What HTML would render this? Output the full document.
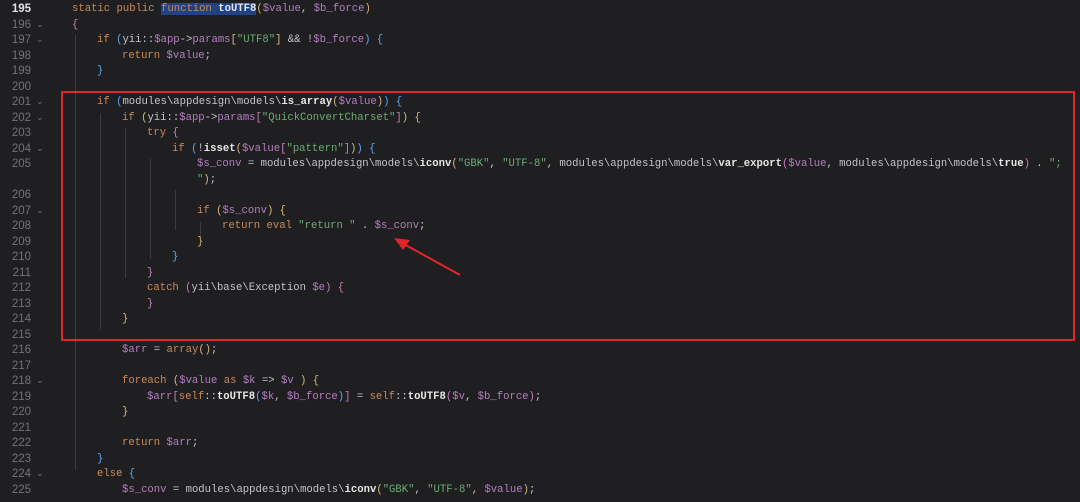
<!DOCTYPE html>
<html><head><meta charset="utf-8"><style>
body{margin:0;width:1080px;height:488px;background:#1f1f21;overflow:hidden;position:relative;font-family:"Liberation Mono",monospace;font-size:10.6px;color:#c3c5ca}
#w{position:absolute;left:0;top:2px;width:1080px;height:500px}
.r{position:absolute;left:0;height:15.5px;line-height:15.5px;white-space:pre;width:1080px}
.n{position:absolute;right:1049px;color:#6f737a;text-align:right;font-family:"Liberation Sans",sans-serif;font-size:11.5px}
.n.cur{color:#dfe1e5;font-weight:bold}
.f{position:absolute;left:36px;color:#6f737a;font-size:9px}
.c{position:absolute}
.k{color:#c98a58}.v{color:#b47ec0}.s{color:#6aab73}.fn{color:#e6e6e6;font-weight:bold}.p1{color:#d5b778}.p2{color:#c77dbb}.p3{color:#56a8f5}
.g{position:absolute;width:1px;background:#393b40}
</style></head><body><div id="w">
<div class="g" style="left:75px;top:33px;height:435px"></div>
<div class="g" style="left:100px;top:111px;height:216px"></div>
<div class="g" style="left:125px;top:126px;height:150px"></div>
<div class="g" style="left:150px;top:157px;height:100px"></div>
<div class="g" style="left:175px;top:188px;height:40px"></div>
<div class="g" style="left:200px;top:220px;height:15px"></div>

<div class="r" style="top:0px"><span class="n cur">195</span><span class="c" style="left:72px"><span class="k">static public </span><span class="k" style="background:#214283">function</span><span class="fn" style="background:#214283"> toUTF8</span><span class="p1">(</span><span class="v">$value</span>, <span class="v">$b_force</span><span class="p1">)</span></span></div>
<div class="r" style="top:15.5px"><span class="n">196</span><span class="f">⌄</span><span class="c p2" style="left:72px">{</span></div>
<div class="r" style="top:31px"><span class="n">197</span><span class="f">⌄</span><span class="c" style="left:97px"><span class="k">if </span><span class="p3">(</span>yii::<span class="v">$app</span>-&gt;<span class="v">params</span><span class="p1">[</span><span class="s">"UTF8"</span><span class="p1">]</span> &amp;&amp; !<span class="v">$b_force</span><span class="p3">)</span> <span class="p3">{</span></span></div>
<div class="r" style="top:46.5px"><span class="n">198</span><span class="c" style="left:122px"><span class="k">return </span><span class="v">$value</span>;</span></div>
<div class="r" style="top:62px"><span class="n">199</span><span class="c p3" style="left:97px">}</span></div>
<div class="r" style="top:77.5px"><span class="n">200</span></div>
<div class="r" style="top:93px"><span class="n">201</span><span class="f">⌄</span><span class="c" style="left:97px"><span class="k">if </span><span class="p3">(</span>modules\appdesign\models\<span class="fn">is_array</span><span class="p1">(</span><span class="v">$value</span><span class="p1">)</span><span class="p3">)</span> <span class="p3">{</span></span></div>
<div class="r" style="top:108.5px"><span class="n">202</span><span class="f">⌄</span><span class="c" style="left:122px"><span class="k">if </span><span class="p1">(</span>yii::<span class="v">$app</span>-&gt;<span class="v">params</span><span class="p2">[</span><span class="s">"QuickConvertCharset"</span><span class="p2">]</span><span class="p1">)</span> <span class="p1">{</span></span></div>
<div class="r" style="top:124px"><span class="n">203</span><span class="c" style="left:147px"><span class="k">try </span><span class="p2">{</span></span></div>
<div class="r" style="top:139.5px"><span class="n">204</span><span class="f">⌄</span><span class="c" style="left:172px"><span class="k">if </span><span class="p3">(</span>!<span class="fn">isset</span><span class="p1">(</span><span class="v">$value</span><span class="p2">[</span><span class="s">"pattern"</span><span class="p2">]</span><span class="p1">)</span><span class="p3">)</span> <span class="p3">{</span></span></div>
<div class="r" style="top:155px"><span class="n">205</span><span class="c" style="left:197px"><span class="v">$s_conv</span> = modules\appdesign\models\<span class="fn">iconv</span><span class="p1">(</span><span class="s">"GBK"</span>, <span class="s">"UTF-8"</span>, modules\appdesign\models\<span class="fn">var_export</span><span class="p2">(</span><span class="v">$value</span>, modules\appdesign\models\<span class="fn">true</span><span class="p2">)</span> . <span class="s">";</span></span></div>
<div class="r" style="top:170.5px"><span class="c" style="left:197px"><span class="s">"</span><span class="p1">)</span>;</span></div>
<div class="r" style="top:186px"><span class="n">206</span></div>
<div class="r" style="top:201.5px"><span class="n">207</span><span class="f">⌄</span><span class="c" style="left:197px"><span class="k">if </span><span class="p1">(</span><span class="v">$s_conv</span><span class="p1">)</span> <span class="p1">{</span></span></div>
<div class="r" style="top:217px"><span class="n">208</span><span class="c" style="left:222px"><span class="k">return eval </span><span class="s">"return "</span> . <span class="v">$s_conv</span>;</span></div>
<div class="r" style="top:232.5px"><span class="n">209</span><span class="c p1" style="left:197px">}</span></div>
<div class="r" style="top:248px"><span class="n">210</span><span class="c p3" style="left:172px">}</span></div>
<div class="r" style="top:263.5px"><span class="n">211</span><span class="c p2" style="left:147px">}</span></div>
<div class="r" style="top:279px"><span class="n">212</span><span class="c" style="left:147px"><span class="k">catch </span><span class="p2">(</span>yii\base\Exception <span class="v">$e</span><span class="p2">)</span> <span class="p2">{</span></span></div>
<div class="r" style="top:294.5px"><span class="n">213</span><span class="c p2" style="left:147px">}</span></div>
<div class="r" style="top:310px"><span class="n">214</span><span class="c p1" style="left:122px">}</span></div>
<div class="r" style="top:325.5px"><span class="n">215</span></div>
<div class="r" style="top:341px"><span class="n">216</span><span class="c" style="left:122px"><span class="v">$arr</span> = <span class="k">array</span><span class="p1">()</span>;</span></div>
<div class="r" style="top:356.5px"><span class="n">217</span></div>
<div class="r" style="top:372px"><span class="n">218</span><span class="f">⌄</span><span class="c" style="left:122px"><span class="k">foreach </span><span class="p1">(</span><span class="v">$value</span><span class="k"> as </span><span class="v">$k</span> =&gt; <span class="v">$v</span> <span class="p1">)</span> <span class="p1">{</span></span></div>
<div class="r" style="top:387.5px"><span class="n">219</span><span class="c" style="left:147px"><span class="v">$arr</span><span class="p2">[</span><span class="k">self</span>::<span class="fn">toUTF8</span><span class="p3">(</span><span class="v">$k</span>, <span class="v">$b_force</span><span class="p3">)</span><span class="p2">]</span> = <span class="k">self</span>::<span class="fn">toUTF8</span><span class="p2">(</span><span class="v">$v</span>, <span class="v">$b_force</span><span class="p2">)</span>;</span></div>
<div class="r" style="top:403px"><span class="n">220</span><span class="c p1" style="left:122px">}</span></div>
<div class="r" style="top:418.5px"><span class="n">221</span></div>
<div class="r" style="top:434px"><span class="n">222</span><span class="c" style="left:122px"><span class="k">return </span><span class="v">$arr</span>;</span></div>
<div class="r" style="top:449.5px"><span class="n">223</span><span class="c p3" style="left:97px">}</span></div>
<div class="r" style="top:465px"><span class="n">224</span><span class="f">⌄</span><span class="c" style="left:97px"><span class="k">else </span><span class="p3">{</span></span></div>
<div class="r" style="top:480.5px"><span class="n">225</span><span class="c" style="left:122px"><span class="v">$s_conv</span> = modules\appdesign\models\<span class="fn">iconv</span><span class="p1">(</span><span class="s">"GBK"</span>, <span class="s">"UTF-8"</span>, <span class="v">$value</span><span class="p1">)</span>;</span></div>
</div>
<div style="position:absolute;left:61px;top:91px;width:1010px;height:246px;border:2px solid #e0262b"></div>
<svg style="position:absolute;left:0;top:0" width="1080" height="488"><line x1="460" y1="275" x2="402" y2="243" stroke="#e0262b" stroke-width="2"/><polygon points="394,238 410,240 403,250" fill="#e0262b"/></svg>
</body></html>
